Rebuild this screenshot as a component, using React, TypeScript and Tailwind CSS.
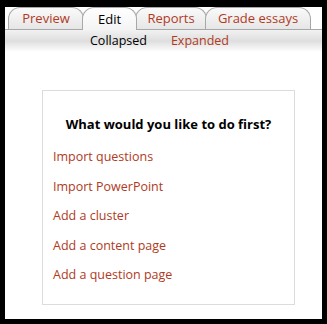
import React from 'react';

const tabs = [
  { label: 'Preview', w: 'w-[76px]', active: false },
  { label: 'Edit', w: 'w-[55px]', active: true },
  { label: 'Reports', w: 'w-[72px]', active: false },
  { label: 'Grade essays', w: 'w-[106px]', active: false },
];

const actions = [
  'Import questions',
  'Import PowerPoint',
  'Add a cluster',
  'Add a content page',
  'Add a question page',
];

const App: React.FC = () => {
  return (
    <div className="w-[327px] h-[324px] bg-black pt-[7px] pl-[5px] pr-[5px] pb-[5px]" style={{ fontFamily: '"Open Sans", "DejaVu Sans", sans-serif' }}>
      <div className="bg-white h-full flex flex-col">
        {/* Tabs */}
        <div className="flex items-end h-[23px] pl-[3px] border-b border-[#a8a8a8]">
          {tabs.map((t, i) => (
            <div
              key={t.label}
              className={`${t.w} ${i > 0 ? '-ml-[2px]' : ''} h-[22px] flex items-center justify-center rounded-t-[12px] border border-b-0 border-[#a8a8a8] text-[13px] leading-none ${
                t.active
                  ? 'bg-gradient-to-b from-white to-[#f4f4f4] text-black relative z-10 h-[23px] -mb-px'
                  : 'bg-gradient-to-b from-[#fafafa] to-[#e6e6e6] text-[#b03a1e]'
              }`}
            >
              {t.label}
            </div>
          ))}
        </div>

        {/* Sub navigation */}
        <div className="h-[22px] bg-gradient-to-b from-[#f2f2f2] via-[#dedede] to-white flex items-center justify-center gap-[24px] pr-[8px] text-[12.5px] leading-none">
          <span className="text-black">Collapsed</span>
          <span className="text-[#b03a1e]">Expanded</span>
        </div>

        {/* Options box */}
        <div className="mt-[38px] ml-[37px] w-[253px] h-[215px] border border-[#dcdcdc] pt-[27px] px-[10px]">
          <h2 className="text-center font-bold text-[13px] text-black leading-none mb-[19px]">What would you like to do first?</h2>
          <div className="flex flex-col gap-[15.5px]">
            {actions.map((a) => (
              <a key={a} href="#" className="text-[12.5px] leading-[14px] text-[#b03a1e]">
                {a}
              </a>
            ))}
          </div>
        </div>
      </div>
    </div>
  );
};

export default App;
